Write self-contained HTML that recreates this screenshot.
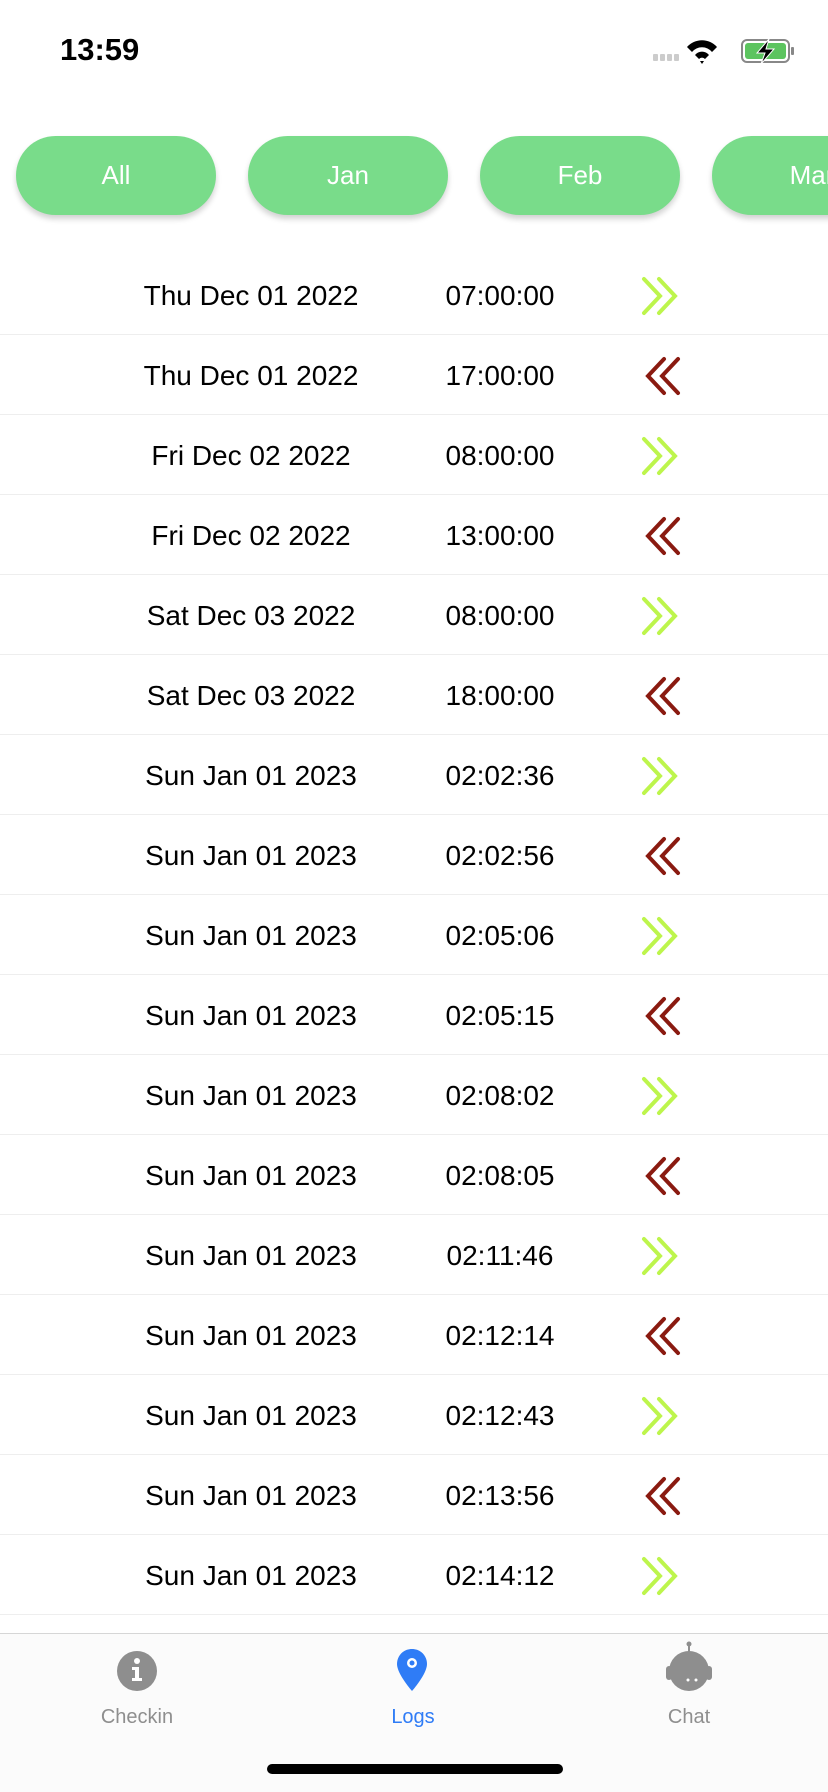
<!DOCTYPE html>
<html><head><meta charset="utf-8"><style>
*{margin:0;padding:0;box-sizing:border-box}
body{width:828px;height:1792px;background:#fff;font-family:"Liberation Sans",sans-serif;position:relative;overflow:hidden}
.time{position:absolute;left:60px;top:32px;font-size:31px;font-weight:bold;color:#000}
.pill{position:absolute;top:136px;width:200px;height:79px;border-radius:40px;background:#79DC8A;color:#fff;font-size:26px;display:flex;align-items:center;justify-content:center;box-shadow:0 4px 6px rgba(0,0,0,.18)}
.row{position:absolute;left:0;width:828px;height:80px;border-bottom:1.5px solid #eee}
.d{position:absolute;left:111px;width:280px;text-align:center;top:25px;font-size:28px;color:#000}
.t{position:absolute;left:420px;width:160px;text-align:center;top:25px;font-size:28px;color:#000}
.a{position:absolute;left:640px;top:20px}
.tab{position:absolute;top:1633px;left:0;width:828px;height:159px;background:#fbfbfb;border-top:1.5px solid #d6d6d6}
.lbl{position:absolute;top:1706px;font-size:20px;width:140px;text-align:center}
</style></head><body>
<div class="time">13:59</div>
<svg style="position:absolute;left:650px;top:37px" width="145" height="30" viewBox="0 0 145 30">
<g fill="#ccc"><rect x="3" y="17" width="5" height="7" rx="1"/><rect x="10" y="17" width="5" height="7" rx="1"/><rect x="17" y="17" width="5" height="7" rx="1"/><rect x="24" y="17" width="5" height="7" rx="1"/></g>
<path d="M37 10 A20 20 0 0 1 67 10 L62 15 A13 13 0 0 0 42 15Z M45 18 A9 9 0 0 1 59 18 L55 22 A4 4 0 0 0 49 22Z M50 24 L54 24 L52 27Z" fill="#000"/>
<rect x="92" y="3" width="47" height="22" rx="5" fill="none" stroke="#888" stroke-width="2"/>
<rect x="95" y="6" width="41" height="16" rx="3" fill="#5cc45f"/>
<rect x="141" y="10" width="3" height="8" rx="1" fill="#888"/>
<path d="M119 2 L107 16 L115 16 L111 27 L124 12 L116 12Z" fill="#000" stroke="#fff" stroke-width="1"/>
</svg>
<div class="pill" style="left:16px">All</div>
<div class="pill" style="left:248px">Jan</div>
<div class="pill" style="left:480px">Feb</div>
<div class="pill" style="left:712px">Mar</div>
<div id="rows"></div>
<script>
var d=[["Thu Dec 01 2022","07:00:00",1],["Thu Dec 01 2022","17:00:00",0],["Fri Dec 02 2022","08:00:00",1],["Fri Dec 02 2022","13:00:00",0],["Sat Dec 03 2022","08:00:00",1],["Sat Dec 03 2022","18:00:00",0],["Sun Jan 01 2023","02:02:36",1],["Sun Jan 01 2023","02:02:56",0],["Sun Jan 01 2023","02:05:06",1],["Sun Jan 01 2023","02:05:15",0],["Sun Jan 01 2023","02:08:02",1],["Sun Jan 01 2023","02:08:05",0],["Sun Jan 01 2023","02:11:46",1],["Sun Jan 01 2023","02:12:14",0],["Sun Jan 01 2023","02:12:43",1],["Sun Jan 01 2023","02:13:56",0],["Sun Jan 01 2023","02:14:12",1],["Sun Jan 01 2023","02:14:30",0]];
var h="";
d.forEach(function(r,i){
var ar=r[2]?'<path d="M4 4 L20 21 L4 38 M19 4 L35 21 L19 38" fill="none" stroke="#BDF54C" stroke-width="4" stroke-linecap="round"/>':'<path d="M38 4 L22 21 L38 38 M24 4 L8 21 L24 38" fill="none" stroke="#8A1A10" stroke-width="4" stroke-linecap="round"/>';
h+='<div class="row" style="top:'+(255+i*80)+'px"><div class="d">'+r[0]+'</div><div class="t">'+r[1]+'</div><svg class="a" width="44" height="42">'+ar+'</svg></div>';
});
document.getElementById("rows").innerHTML=h;
</script>
<div class="tab"></div>
<svg style="position:absolute;left:117px;top:1651px" width="40" height="40"><circle cx="20" cy="20" r="20" fill="#8e8e8e"/><circle cx="20" cy="10" r="3" fill="#fff"/><path d="M15 16 H22 V27 H25 V30 H15 V27 H18 V19 H15Z" fill="#fff"/></svg>
<svg style="position:absolute;left:396px;top:1648px" width="32" height="44"><path d="M16 1 C7 1 1 8 1 16 C1 26 16 43 16 43 C16 43 31 26 31 16 C31 8 25 1 16 1Z" fill="#2f7cf6"/><circle cx="16" cy="15" r="5" fill="#fff"/><circle cx="16" cy="15" r="2.5" fill="#2f7cf6"/></svg>
<svg style="position:absolute;left:666px;top:1640px" width="46" height="52"><circle cx="23" cy="4" r="2.5" fill="#8e8e8e"/><line x1="23" y1="4" x2="23" y2="12" stroke="#8e8e8e" stroke-width="2"/><circle cx="23" cy="31" r="20" fill="#8e8e8e"/><rect x="0" y="26" width="6" height="14" rx="3" fill="#8e8e8e"/><rect x="40" y="26" width="6" height="14" rx="3" fill="#8e8e8e"/><circle cx="22" cy="40" r="1.5" fill="#fff"/><circle cx="30" cy="40" r="1.5" fill="#fff"/></svg>
<div class="lbl" style="left:67px;color:#8e8e8e">Checkin</div>
<div class="lbl" style="left:343px;color:#2f7cf6">Logs</div>
<div class="lbl" style="left:619px;color:#8e8e8e">Chat</div>
<div style="position:absolute;left:267px;top:1764px;width:296px;height:10px;border-radius:5px;background:#000"></div>
</body></html>
